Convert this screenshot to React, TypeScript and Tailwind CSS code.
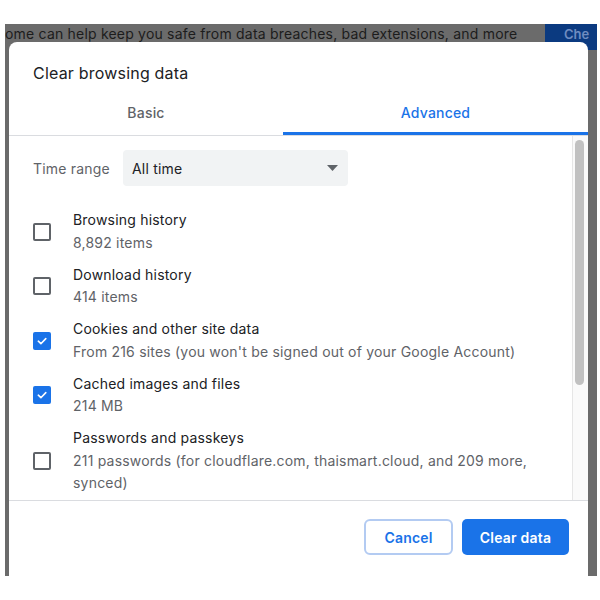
const items = [
  { title: 'Browsing history', sub: '8,892 items', checked: false },
  { title: 'Download history', sub: '414 items', checked: false },
  {
    title: 'Cookies and other site data',
    sub: "From 216 sites (you won't be signed out of your Google Account)",
    checked: true,
  },
  { title: 'Cached images and files', sub: '214 MB', checked: true },
  {
    title: 'Passwords and passkeys',
    sub: '211 passwords (for cloudflare.com, thaismart.cloud, and 209 more, synced)',
    checked: false,
  },
]

const Checkbox = ({ checked }: { checked: boolean }) =>
  checked ? (
    <div className="w-[18px] h-[18px] shrink-0 rounded-[2px] bg-[#1a73e8] flex items-center justify-center">
      <svg width="12" height="12" viewBox="0 0 12 12" fill="none">
        <path
          d="M2.3 6.2 L4.9 8.7 L9.8 3.6"
          stroke="white"
          strokeWidth="1.6"
          strokeLinecap="round"
          strokeLinejoin="round"
        />
      </svg>
    </div>
  ) : (
    <div className="w-[18px] h-[18px] shrink-0 rounded-[2px] border-2 border-[#5f6368]" />
  )

export default function App() {
  return (
    <div className="w-[600px] h-[600px] bg-white pt-[24px] pl-[5px] font-['Inter',sans-serif] tracking-[0.2px]">
      <div className="w-[592px] h-[552px] bg-[#6b6b6b] flex flex-col overflow-hidden">
        {/* page behind the dialog */}
        <div className="h-[26px] flex items-start shrink-0">
          <span className="text-[14px] leading-[20px] text-[#1c1c1c] whitespace-nowrap">
            ome can help keep you safe from data breaches, bad extensions, and more
          </span>
          <div className="ml-auto w-[52px] h-[26px] bg-[#0b3a80] pl-[19px] text-[13px] leading-[20px] font-semibold tracking-normal text-[#6f8cc0] whitespace-nowrap">
            Che
          </div>
        </div>

        {/* dialog */}
        <div className="-mt-[8px] ml-[4px] w-[579px] flex-1 bg-white rounded-t-[8px] flex flex-col relative overflow-hidden">
          <div className="pt-[19px] pb-[4px] pl-[24px] text-[16px] leading-[24px] text-[#202124]">
            Clear browsing data
          </div>

          <div className="flex h-[47px] border-b border-[#dadce0] shrink-0">
            <div className="w-[274px] flex items-center justify-center text-[14px] font-medium text-[#5f6368]">
              Basic
            </div>
            <div className="flex-1 relative flex items-center justify-center text-[14px] font-medium text-[#1a73e8]">
              Advanced
              <div className="absolute left-0 right-0 bottom-0 h-[3px] bg-[#1a73e8]" />
            </div>
          </div>

          <div className="flex flex-1 min-h-0">
            <div className="flex-1 pt-[14px] pl-[24px] overflow-hidden">
              <div className="flex items-center h-[36px]">
                <span className="w-[90px] text-[14px] text-[#5f6368]">Time range</span>
                <div className="w-[225px] h-[36px] bg-[#f1f3f4] rounded-[4px] flex items-center pl-[9px] pr-[10px] text-[14px] text-[#202124]">
                  All time
                  <svg className="ml-auto" width="11" height="6" viewBox="0 0 11 6">
                    <path d="M0 0 L11 0 L5.5 6 Z" fill="#5f6368" />
                  </svg>
                </div>
              </div>

              <div className="mt-[23px] flex flex-col gap-[9.5px]">
                {items.map((item) => (
                  <div key={item.title} className="flex items-center gap-[22px]">
                    <Checkbox checked={item.checked} />
                    <div className="w-[462px] text-[14px] leading-[22.5px]">
                      <div className="text-[#202124]">{item.title}</div>
                      <div className="text-[#5f6368]">{item.sub}</div>
                    </div>
                  </div>
                ))}
              </div>
            </div>

            {/* scrollbar */}
            <div className="w-[16px] bg-[#fafafa] border-l border-[#e6e6e6] pt-[4px] pl-[2px]">
              <div className="w-[9px] h-[245px] rounded-full bg-[#c1c1c1]" />
            </div>
          </div>

          <div className="border-t border-[#dadce0] pt-[18px] pb-[21px] pr-[19px] flex justify-end gap-[9px] shrink-0">
            <button className="w-[89px] h-[36px] rounded-[6px] border-2 border-[#b3cbf2] text-[14px] font-semibold text-[#1a73e8] bg-white">
              Cancel
            </button>
            <button className="w-[107px] h-[36px] rounded-[5px] bg-[#1a73e8] text-[14px] font-semibold text-white">
              Clear data
            </button>
          </div>
        </div>
      </div>
    </div>
  )
}
